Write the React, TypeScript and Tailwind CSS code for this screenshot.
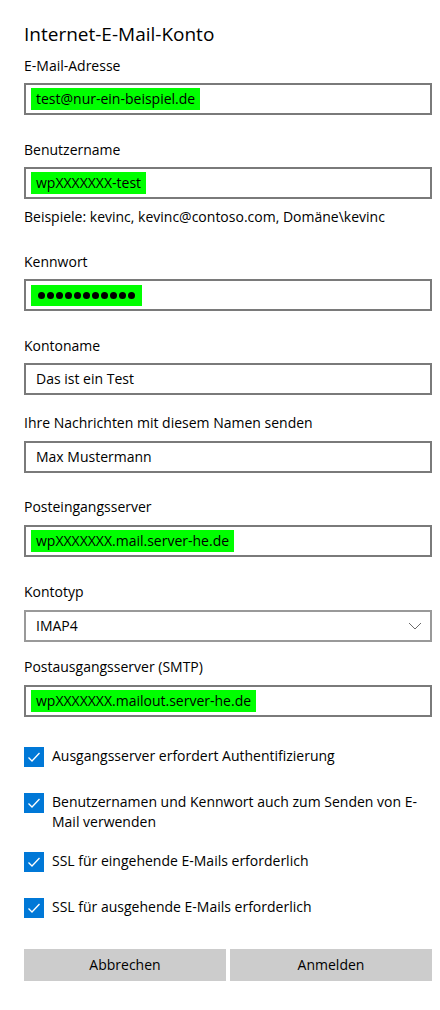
import React from "react";

const font = { fontFamily: '"Open Sans", "Noto Sans", sans-serif' };

function Field({ value, mark, gap }: { value: string; mark?: boolean; gap?: string }) {
	return (
		<div className={`h-[32px] border-2 border-[#7a7a7a] flex items-center ${mark ? "pl-[5px]" : "pl-[10px]"} ${gap ?? ""}`}>
			{mark ? (
				<span className="bg-[#00ff00] px-[5px] leading-[22px]">{value}</span>
			) : (
				<span>{value}</span>
			)}
		</div>
	);
}

function Dots() {
	return (
		<div className="h-[32px] border-2 border-[#7a7a7a] flex items-center pl-[5px]">
			<div className="bg-[#00ff00] h-[21px] w-[111px] flex items-center gap-[2px] pl-[7px]">
				{Array.from({ length: 11 }).map((_, i) => (
					<span key={i} className="w-[7px] h-[7px] rounded-full bg-black" />
				))}
			</div>
		</div>
	);
}

function Check({ children, className }: { children: React.ReactNode; className?: string }) {
	return (
		<div className={`flex gap-[8px] ${className ?? ""}`}>
			<div className="w-[20px] h-[20px] shrink-0 bg-[#0078d7] flex items-center justify-center mt-[1px]">
				<svg width="14" height="14" viewBox="0 0 14 14" fill="none">
					<path d="M1.5 7.5 L5 11 L12.5 3" stroke="white" strokeWidth="1.3" />
				</svg>
			</div>
			<div className="leading-[20px]">{children}</div>
		</div>
	);
}

export default function App() {
	return (
		<div style={font} className="w-[440px] h-[1010px] bg-white text-[14px] text-black leading-[20px] pl-6 pr-2 pt-[20px]">
			<div className="text-[19px] leading-[28px]">Internet-E-Mail-Konto</div>

			<div className="mt-[8px]">E-Mail-Adresse</div>
			<Field value="test@nur-ein-beispiel.de" mark gap="mt-[7px]" />

			<div className="mt-[25px]">Benutzername</div>
			<Field value="wpXXXXXXX-test" mark gap="mt-[7px]" />
			<div className="mt-[8px]">Beispiele: kevinc, kevinc@contoso.com, Domäne\kevinc</div>

			<div className="mt-[25px]">Kennwort</div>
			<div className="mt-[7px]">
				<Dots />
			</div>

			<div className="mt-[25px]">Kontoname</div>
			<Field value="Das ist ein Test" gap="mt-[7px]" />

			<div className="mt-[18px]">Ihre Nachrichten mit diesem Namen senden</div>
			<Field value="Max Mustermann" gap="mt-[8px]" />

			<div className="mt-[24px]">Posteingangsserver</div>
			<Field value="wpXXXXXXX.mail.server-he.de" mark gap="mt-[8px]" />

			<div className="mt-[25px]">Kontotyp</div>
			<div className="mt-[8px] h-[32px] border-2 border-[#999999] flex items-center justify-between pl-[10px] pr-[8px]">
				<span>IMAP4</span>
				<svg width="14" height="8" viewBox="0 0 14 8" fill="none">
					<path d="M1 1 L7 7 L13 1" stroke="#6b6b6b" strokeWidth="1" />
				</svg>
			</div>

			<div className="mt-[15px]">Postausgangsserver (SMTP)</div>
			<Field value="wpXXXXXXX.mailout.server-he.de" mark gap="mt-[8px]" />

			<Check className="mt-[29px]">Ausgangsserver erfordert Authentifizierung</Check>
			<Check className="mt-[25px]">
				Benutzernamen und Kennwort auch zum Senden von E-
				<br />
				Mail verwenden
			</Check>
			<Check className="mt-[19px]">SSL für eingehende E-Mails erforderlich</Check>
			<Check className="mt-[25px]">SSL für ausgehende E-Mails erforderlich</Check>

			<div className="mt-[31px] grid grid-cols-2 gap-[4px]">
				<button className="h-[32px] bg-[#cccccc]">Abbrechen</button>
				<button className="h-[32px] bg-[#cccccc]">Anmelden</button>
			</div>
		</div>
	);
}
